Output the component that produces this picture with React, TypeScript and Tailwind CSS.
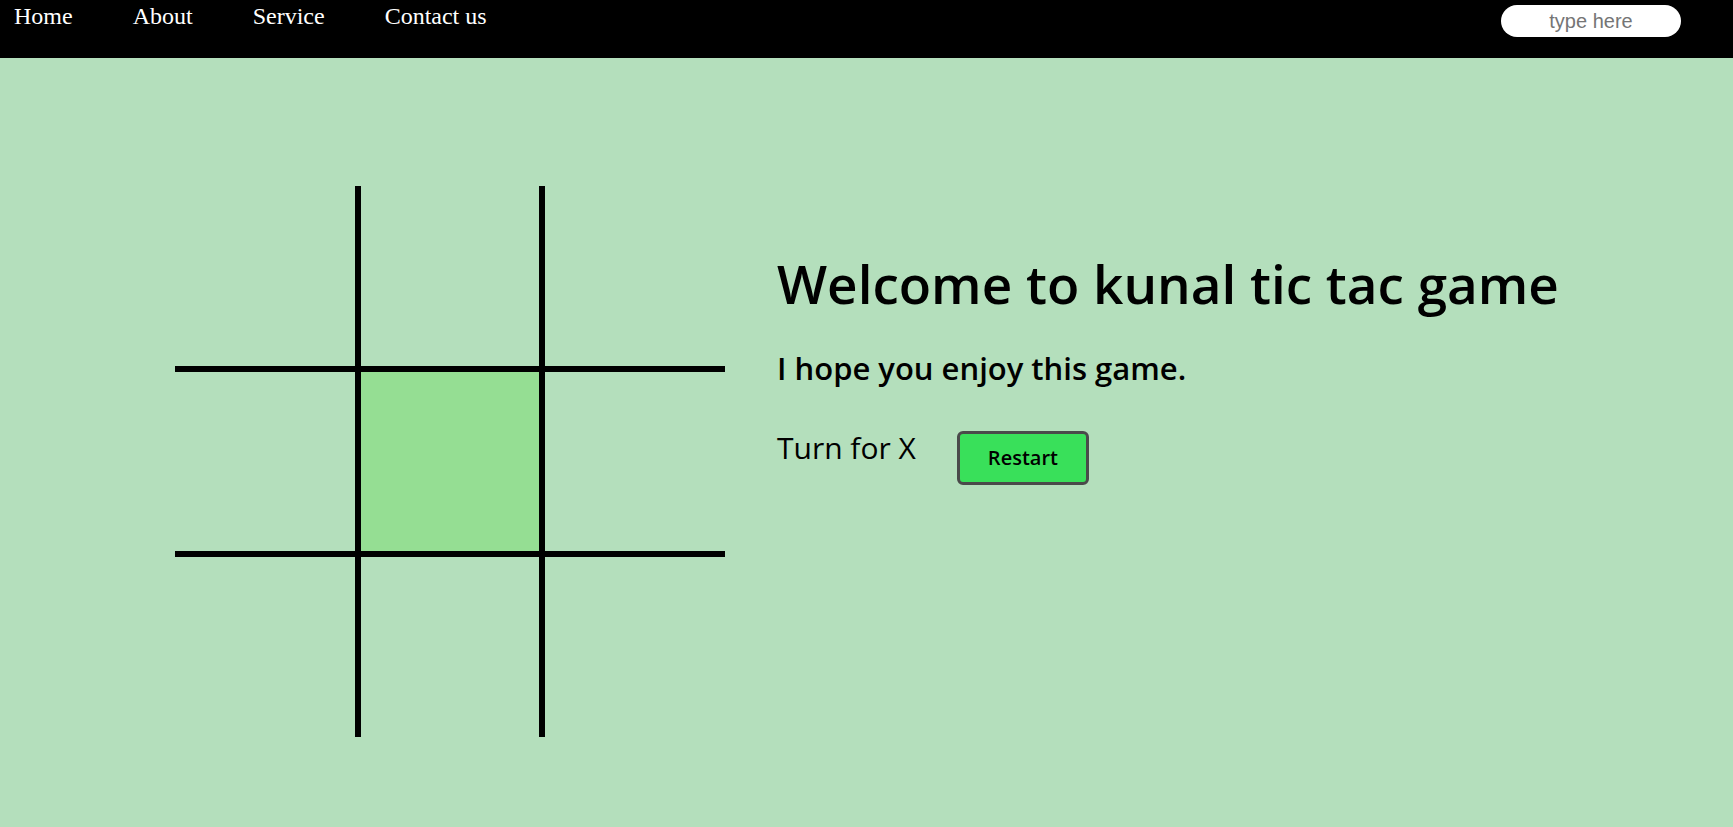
import React from "react";

const cells = [0, 1, 2, 3, 4, 5, 6, 7, 8];

function borderFor(i: number): string {
  const row = Math.floor(i / 3);
  const col = i % 3;
  const parts: string[] = [];
  if (row === 0) parts.push("border-b-[3px]");
  if (row === 1) parts.push("border-y-[3px]");
  if (row === 2) parts.push("border-t-[3px]");
  if (col === 0) parts.push("border-r-[3px]");
  if (col === 1) parts.push("border-x-[3px]");
  if (col === 2) parts.push("border-l-[3px]");
  return parts.join(" ");
}

export default function App() {
  return (
    <div className="min-h-[827px] bg-[#b4dfbc]">
      <nav className="h-[58px] bg-black flex items-start justify-between">
        <ul className="flex gap-[60px] pl-[14px] pt-[2px] font-['Liberation_Serif',serif] text-[24px] leading-[28px] text-white">
          <li>Home</li>
          <li>About</li>
          <li>Service</li>
          <li>Contact us</li>
        </ul>
        <div className="pt-[5px] pr-[52px]">
          <input
            type="text"
            placeholder="type here"
            className="w-[180px] h-[32px] rounded-full bg-white text-center font-['Liberation_Sans',sans-serif] text-[20px] placeholder:text-[#757575] outline-none"
          />
        </div>
      </nav>
      <main className="flex pt-[128px] pl-[175px]">
        <div className="grid grid-cols-3 w-[550px] h-[551px] shrink-0">
          {cells.map((i) => (
            <div
              key={i}
              className={`${borderFor(i)} border-black ${i === 4 ? "bg-[#95de93]" : ""}`}
            />
          ))}
        </div>
        <div className="ml-[52px] pt-[66px] font-['Open_Sans',sans-serif] text-black">
          <h1 className="text-[53px] font-semibold leading-[1.2]">
            Welcome to kunal tic tac game
          </h1>
          <h2 className="mt-[34px] text-[31px] font-semibold leading-[1.2]">
            I hope you enjoy this game.
          </h2>
          <div className="mt-[44px] flex items-center gap-[41px]">
            <span className="text-[30px] leading-none mb-[19px]">Turn for X</span>
            <button className="w-[132px] h-[54px] rounded-[6px] border-[3px] border-[#4a4a4a] bg-[#39e05a] text-[20px] font-semibold">
              Restart
            </button>
          </div>
        </div>
      </main>
    </div>
  );
}
